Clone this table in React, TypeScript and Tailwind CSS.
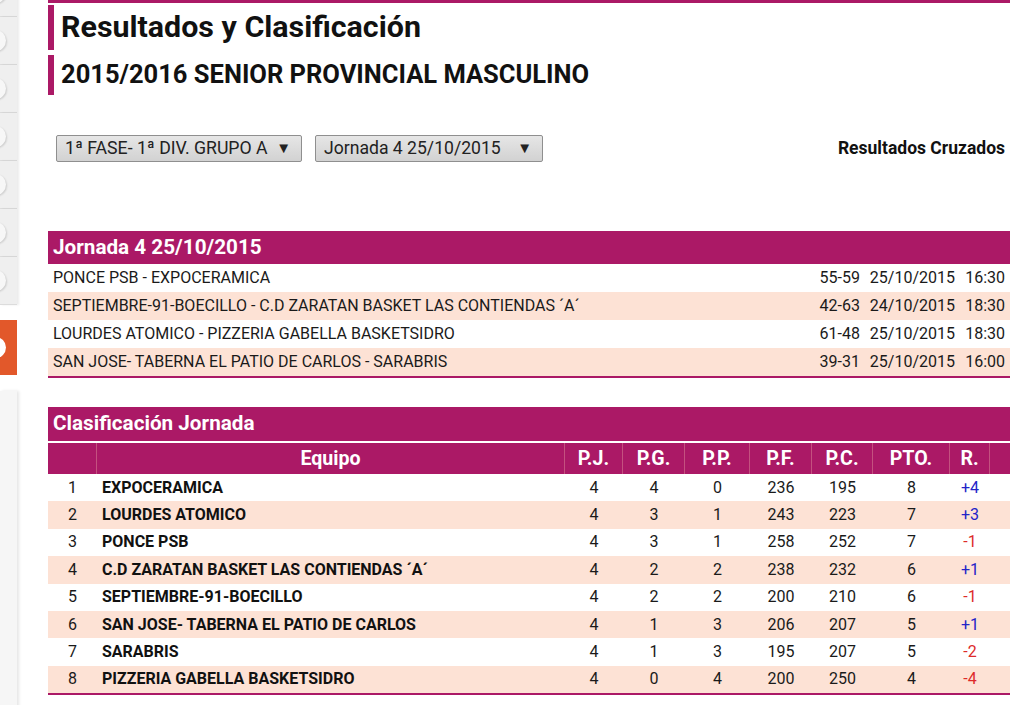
import React from 'react';

const MAG = 'bg-[#ab1966]';

const matches = [
  { teams: 'PONCE PSB - EXPOCERAMICA', score: '55-59', date: '25/10/2015', time: '16:30' },
  { teams: 'SEPTIEMBRE-91-BOECILLO - C.D ZARATAN BASKET LAS CONTIENDAS ´A´', score: '42-63', date: '24/10/2015', time: '18:30' },
  { teams: 'LOURDES ATOMICO - PIZZERIA GABELLA BASKETSIDRO', score: '61-48', date: '25/10/2015', time: '18:30' },
  { teams: 'SAN JOSE- TABERNA EL PATIO DE CARLOS - SARABRIS', score: '39-31', date: '25/10/2015', time: '16:00' },
];

const standings = [
  { pos: 1, team: 'EXPOCERAMICA', pj: 4, pg: 4, pp: 0, pf: 236, pc: 195, pto: 8, r: '+4' },
  { pos: 2, team: 'LOURDES ATOMICO', pj: 4, pg: 3, pp: 1, pf: 243, pc: 223, pto: 7, r: '+3' },
  { pos: 3, team: 'PONCE PSB', pj: 4, pg: 3, pp: 1, pf: 258, pc: 252, pto: 7, r: '-1' },
  { pos: 4, team: 'C.D ZARATAN BASKET LAS CONTIENDAS ´A´', pj: 4, pg: 2, pp: 2, pf: 238, pc: 232, pto: 6, r: '+1' },
  { pos: 5, team: 'SEPTIEMBRE-91-BOECILLO', pj: 4, pg: 2, pp: 2, pf: 200, pc: 210, pto: 6, r: '-1' },
  { pos: 6, team: 'SAN JOSE- TABERNA EL PATIO DE CARLOS', pj: 4, pg: 1, pp: 3, pf: 206, pc: 207, pto: 5, r: '+1' },
  { pos: 7, team: 'SARABRIS', pj: 4, pg: 1, pp: 3, pf: 195, pc: 207, pto: 5, r: '-2' },
  { pos: 8, team: 'PIZZERIA GABELLA BASKETSIDRO', pj: 4, pg: 0, pp: 4, pf: 200, pc: 250, pto: 4, r: '-4' },
];

// column widths for the standings table
const cols = 'grid-cols-[49px_468px_58px_62px_65px_62px_61px_77px_40px_20px]';

function Sidebar() {
  return (
    <div className="flex w-[20px] shrink-0 flex-col">
      {[0, 1, 2, 3, 4, 5, 6].map((i) => (
        <div
          key={i}
          className={`relative h-[48px] w-[17px] shrink-0 overflow-hidden border-b border-[#dcdcdc] bg-[#efefef] ${i === 0 ? 'mt-[-31px]' : ''} shadow-[2px_0_2px_rgba(0,0,0,0.08)]`}
        >
          <div className="absolute left-[-15px] top-[13px] h-[21px] w-[21px] rounded-full bg-[#f7f7f7] shadow-[1px_1px_2px_rgba(0,0,0,0.15)]" />
        </div>
      ))}
      <div className="relative mt-[15px] h-[55px] w-[17px] shrink-0 overflow-hidden bg-[#e2582a]">
        <div className="absolute left-[-15px] top-[17px] h-[21px] w-[21px] rounded-full bg-white" />
      </div>
      <div className="mt-[16px] h-[330px] w-[17px] shrink-0 bg-[#f6f6f6] shadow-[2px_0_3px_rgba(0,0,0,0.1)]" />
    </div>
  );
}

export default function App() {
  return (
    <div className="flex h-[705px] w-[1024px] overflow-hidden bg-white font-['Roboto',sans-serif] text-[#111]">
      <Sidebar />
      <div className="ml-[28px] w-[962px] shrink-0">
        <div className={`h-[3px] ${MAG}`} />
        <div className="mt-[2px] flex h-[45px] items-center border-l-[6px] border-[#ab1966] pl-[7px]">
          <h1 className="text-[30.4px] font-bold leading-none">Resultados y Clasificación</h1>
        </div>
        <div className="mt-[5px] flex h-[40px] items-center border-l-[6px] border-[#ab1966] pl-[7px]">
          <h2 className="text-[25.5px] font-bold leading-none">2015/2016 SENIOR PROVINCIAL MASCULINO</h2>
        </div>

        <div className="mt-[40px] flex items-center pl-[8px] pr-[5px]">
          <div className="flex h-[27px] w-[246px] items-center justify-between rounded-[2px] border border-[#8f8f8f] bg-gradient-to-b from-[#e6e6e6] to-[#d2d2d2] pl-[8px] pr-[10px] text-[17.7px] text-[#222]">
            <span>1ª FASE- 1ª DIV. GRUPO A</span>
            <span className="text-[15px]">▼</span>
          </div>
          <div className="ml-[13px] flex h-[27px] w-[228px] items-center justify-between rounded-[2px] border border-[#8f8f8f] bg-gradient-to-b from-[#e6e6e6] to-[#d2d2d2] pl-[8px] pr-[10px] text-[17.6px] text-[#222]">
            <span>Jornada 4 25/10/2015</span>
            <span className="text-[15px]">▼</span>
          </div>
          <div className="ml-auto self-start text-[17.5px] font-bold">Resultados Cruzados</div>
        </div>

        <div className="mt-[69px]">
          <div className={`flex h-[33px] items-center px-[5px] text-[20.7px] font-bold text-white ${MAG}`}>
            Jornada 4 25/10/2015
          </div>
          {matches.map((m, i) => (
            <div
              key={m.teams}
              className={`flex h-[28px] items-center px-[5px] text-[16px] text-[#1a1a1a] ${i % 2 === 1 ? 'bg-[#fde2d5]' : 'bg-white'}`}
            >
              <span className="flex-1">{m.teams}</span>
              <span className="w-[50px] text-right">{m.score}</span>
              <span className="w-[95px] text-right">{m.date}</span>
              <span className="w-[50px] text-right">{m.time}</span>
            </div>
          ))}
          <div className={`h-[2px] ${MAG}`} />
        </div>

        <div className="mt-[29px]">
          <div className={`flex h-[34px] items-center px-[5px] text-[20.7px] font-bold text-white ${MAG}`}>
            Clasificación Jornada
          </div>
          <div className={`mt-[2px] grid h-[31px] ${cols} ${MAG} text-[19.6px] font-bold text-white`}>
            {['', 'Equipo', 'P.J.', 'P.G.', 'P.P.', 'P.F.', 'P.C.', 'PTO.', 'R.', ''].map((h, i) => (
              <div
                key={i}
                className={`flex items-center justify-center ${i < 9 ? 'border-r border-[#c4517f]' : ''}`}
              >
                {h}
              </div>
            ))}
          </div>
          {standings.map((s, i) => (
            <div
              key={s.pos}
              className={`grid h-[27.4px] ${cols} items-center text-[16px] text-[#1a1a1a] ${i % 2 === 1 ? 'bg-[#fde2d5]' : 'bg-white'}`}
            >
              <div className="text-center">{s.pos}</div>
              <div className="pl-[5px] font-bold text-[#111]">{s.team}</div>
              <div className="text-center">{s.pj}</div>
              <div className="text-center">{s.pg}</div>
              <div className="text-center">{s.pp}</div>
              <div className="text-center">{s.pf}</div>
              <div className="text-center">{s.pc}</div>
              <div className="text-center">{s.pto}</div>
              <div className={`text-center ${s.r.startsWith('+') ? 'text-[#2323c8]' : 'text-[#dd2a2a]'}`}>{s.r}</div>
              <div />
            </div>
          ))}
          <div className={`h-[2px] ${MAG}`} />
        </div>
      </div>
    </div>
  );
}
